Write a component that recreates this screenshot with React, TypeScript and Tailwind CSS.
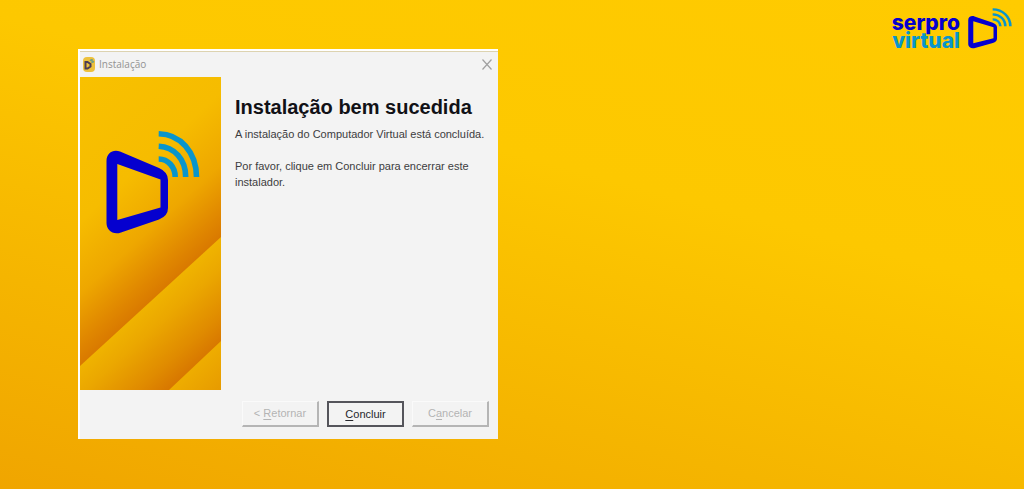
import clsx from 'clsx';

interface WizardButtonProps {
  before?: string;
  accessKey: string;
  after: string;
  primary?: boolean;
}

function Mark({ className }: { className?: string }) {
  return (
    <svg viewBox="26 53 94 105" preserveAspectRatio="none" className={className} aria-hidden="true">
      <path
        fill="#0500cf"
        fillRule="evenodd"
        d="M26.5 84 C26.5 76 33 72 40 74.5 L79 91 Q88 95 88 103 V131 Q88 139 79 142.5 L41 155.5 C33 158.5 26.5 153 26.5 146 Z M37.3 87 V143 L80.5 130.5 V102.5 Z"
      />
      <g fill="none" stroke="#0995cb" strokeWidth="5.6">
        <path d="M78.7 56.7 C100 57 116.5 75 116.5 100" />
        <path d="M78.7 69.3 C94 70 105.7 82 105.7 100" />
        <path d="M78.7 82 C88 82 95.2 90 95.2 100" />
      </g>
    </svg>
  );
}

function Banner() {
  return (
    <div className="relative h-[313px] w-[141px] shrink-0">
      <svg viewBox="0 0 141 313" preserveAspectRatio="none" className="block h-full w-full" aria-hidden="true">
        <defs>
          <linearGradient id="top" gradientUnits="userSpaceOnUse" x1="0" y1="0" x2="144" y2="157">
            <stop offset="0" stopColor="#f8c100" />
            <stop offset="0.5" stopColor="#f6bc00" />
            <stop offset="0.75" stopColor="#eea700" />
            <stop offset="0.92" stopColor="#e08700" />
            <stop offset="1" stopColor="#d97900" />
          </linearGradient>
          <linearGradient id="middle" gradientUnits="userSpaceOnUse" x1="144" y1="157" x2="196" y2="215">
            <stop offset="0" stopColor="#f0b400" />
            <stop offset="0.3" stopColor="#eba700" />
            <stop offset="0.75" stopColor="#e08b00" />
            <stop offset="1" stopColor="#d87800" />
          </linearGradient>
          <linearGradient id="bottom" gradientUnits="userSpaceOnUse" x1="196" y1="215" x2="225" y2="246">
            <stop offset="0" stopColor="#eeac00" />
            <stop offset="1" stopColor="#e59600" />
          </linearGradient>
        </defs>
        <rect width="141" height="313" fill="url(#top)" />
        <path d="M0 289 L141 160 V313 H0 Z" fill="url(#middle)" />
        <path d="M89 313 L141 264 V313 Z" fill="url(#bottom)" />
      </svg>
      <Mark className="absolute left-[26px] top-[53px] h-[105px] w-[94px]" />
    </div>
  );
}

function WizardButton({ before, accessKey, after, primary }: WizardButtonProps) {
  return (
    <button
      type="button"
      disabled={!primary}
      className={clsx(
        'h-[26px] w-[77px] whitespace-pre text-[11px] leading-none',
        primary
          ? 'border-2 border-[#55555b] text-[#26262b]'
          : 'border-t border-l border-r-2 border-b-2 border-t-[#fafafa] border-l-[#fafafa] border-r-[#b5b5b5] border-b-[#b5b5b5] text-[#b4b4b4]'
      )}
    >
      {before}
      <span className="underline underline-offset-2">{accessKey}</span>
      {after}
    </button>
  );
}

export default function App() {
  return (
    <div className="flex min-h-screen items-start justify-between bg-[linear-gradient(195deg,#ffcb00_0%,#fdc800_38%,#f5b500_72%,#f0a500_100%)] font-['Liberation_Sans',sans-serif]">
      <main className="mt-[49px] ml-[78px] flex min-h-[390px] w-[420px] flex-col border-t-2 border-l-2 border-white bg-[#f3f3f3]">
        {/* Title bar */}
        <header className="flex h-[26px] items-center gap-1 border-t border-[#ddd3b0] pr-1 pb-px pl-[3px]">
          <span className="flex h-[15px] w-3 items-center justify-center rounded-sm bg-[#edc13c]">
            <svg viewBox="0 0 12 15" className="h-[15px] w-3" aria-hidden="true">
              <path d="M2.5 5 H4.5 L7.5 7 V9.5 L4.5 11.5 H2.5 Z" fill="none" stroke="#4c3c55" strokeWidth="2" />
              <path d="M7 3 L11 5 M9 2 V6" fill="none" stroke="#75a080" strokeWidth="1.5" />
            </svg>
          </span>
          <span className="font-['Open_Sans',sans-serif] text-[10px] text-[#929292]">Instalação</span>
          <button type="button" aria-label="Fechar" className="ml-auto pr-0.5">
            <svg viewBox="0 0 10 11" className="h-[11px] w-[10px]" aria-hidden="true">
              <path d="M0.5 0.5 L9.5 10.5 M9.5 0.5 L0.5 10.5" stroke="#a0a0a0" strokeWidth="1.2" />
            </svg>
          </button>
        </header>

        <div className="flex">
          <Banner />
          <div className="min-w-0 flex-1 pt-4 pl-[14px] text-[11px] leading-4 text-[#3c3c40]">
            <h1 className="mb-[5px] text-xl leading-7 font-bold whitespace-nowrap text-[#111116]">
              Instalação bem sucedida
            </h1>
            <p className="mb-4 whitespace-nowrap">A instalação do Computador Virtual está concluída.</p>
            <p className="pr-3">Por favor, clique em Concluir para encerrar este instalador.</p>
          </div>
        </div>

        {/* Wizard navigation */}
        <footer className="mt-auto flex justify-end gap-2 pr-[9px] pb-3">
          <WizardButton before="< " accessKey="R" after="etornar" />
          <WizardButton accessKey="C" after="oncluir" primary />
          <WizardButton before="C" accessKey="a" after="ncelar" />
        </footer>
      </main>

      <div className="mt-2 mr-3 flex items-start gap-2">
        <div className="mt-1.5 text-right font-['Inter',sans-serif] text-[21px] leading-[18px] font-extrabold">
          <div className="text-[#0500cf]">serpro</div>
          <div className="text-[#0995cb]">virtual</div>
        </div>
        <Mark className="h-[41px] w-[44px]" />
      </div>
    </div>
  );
}
